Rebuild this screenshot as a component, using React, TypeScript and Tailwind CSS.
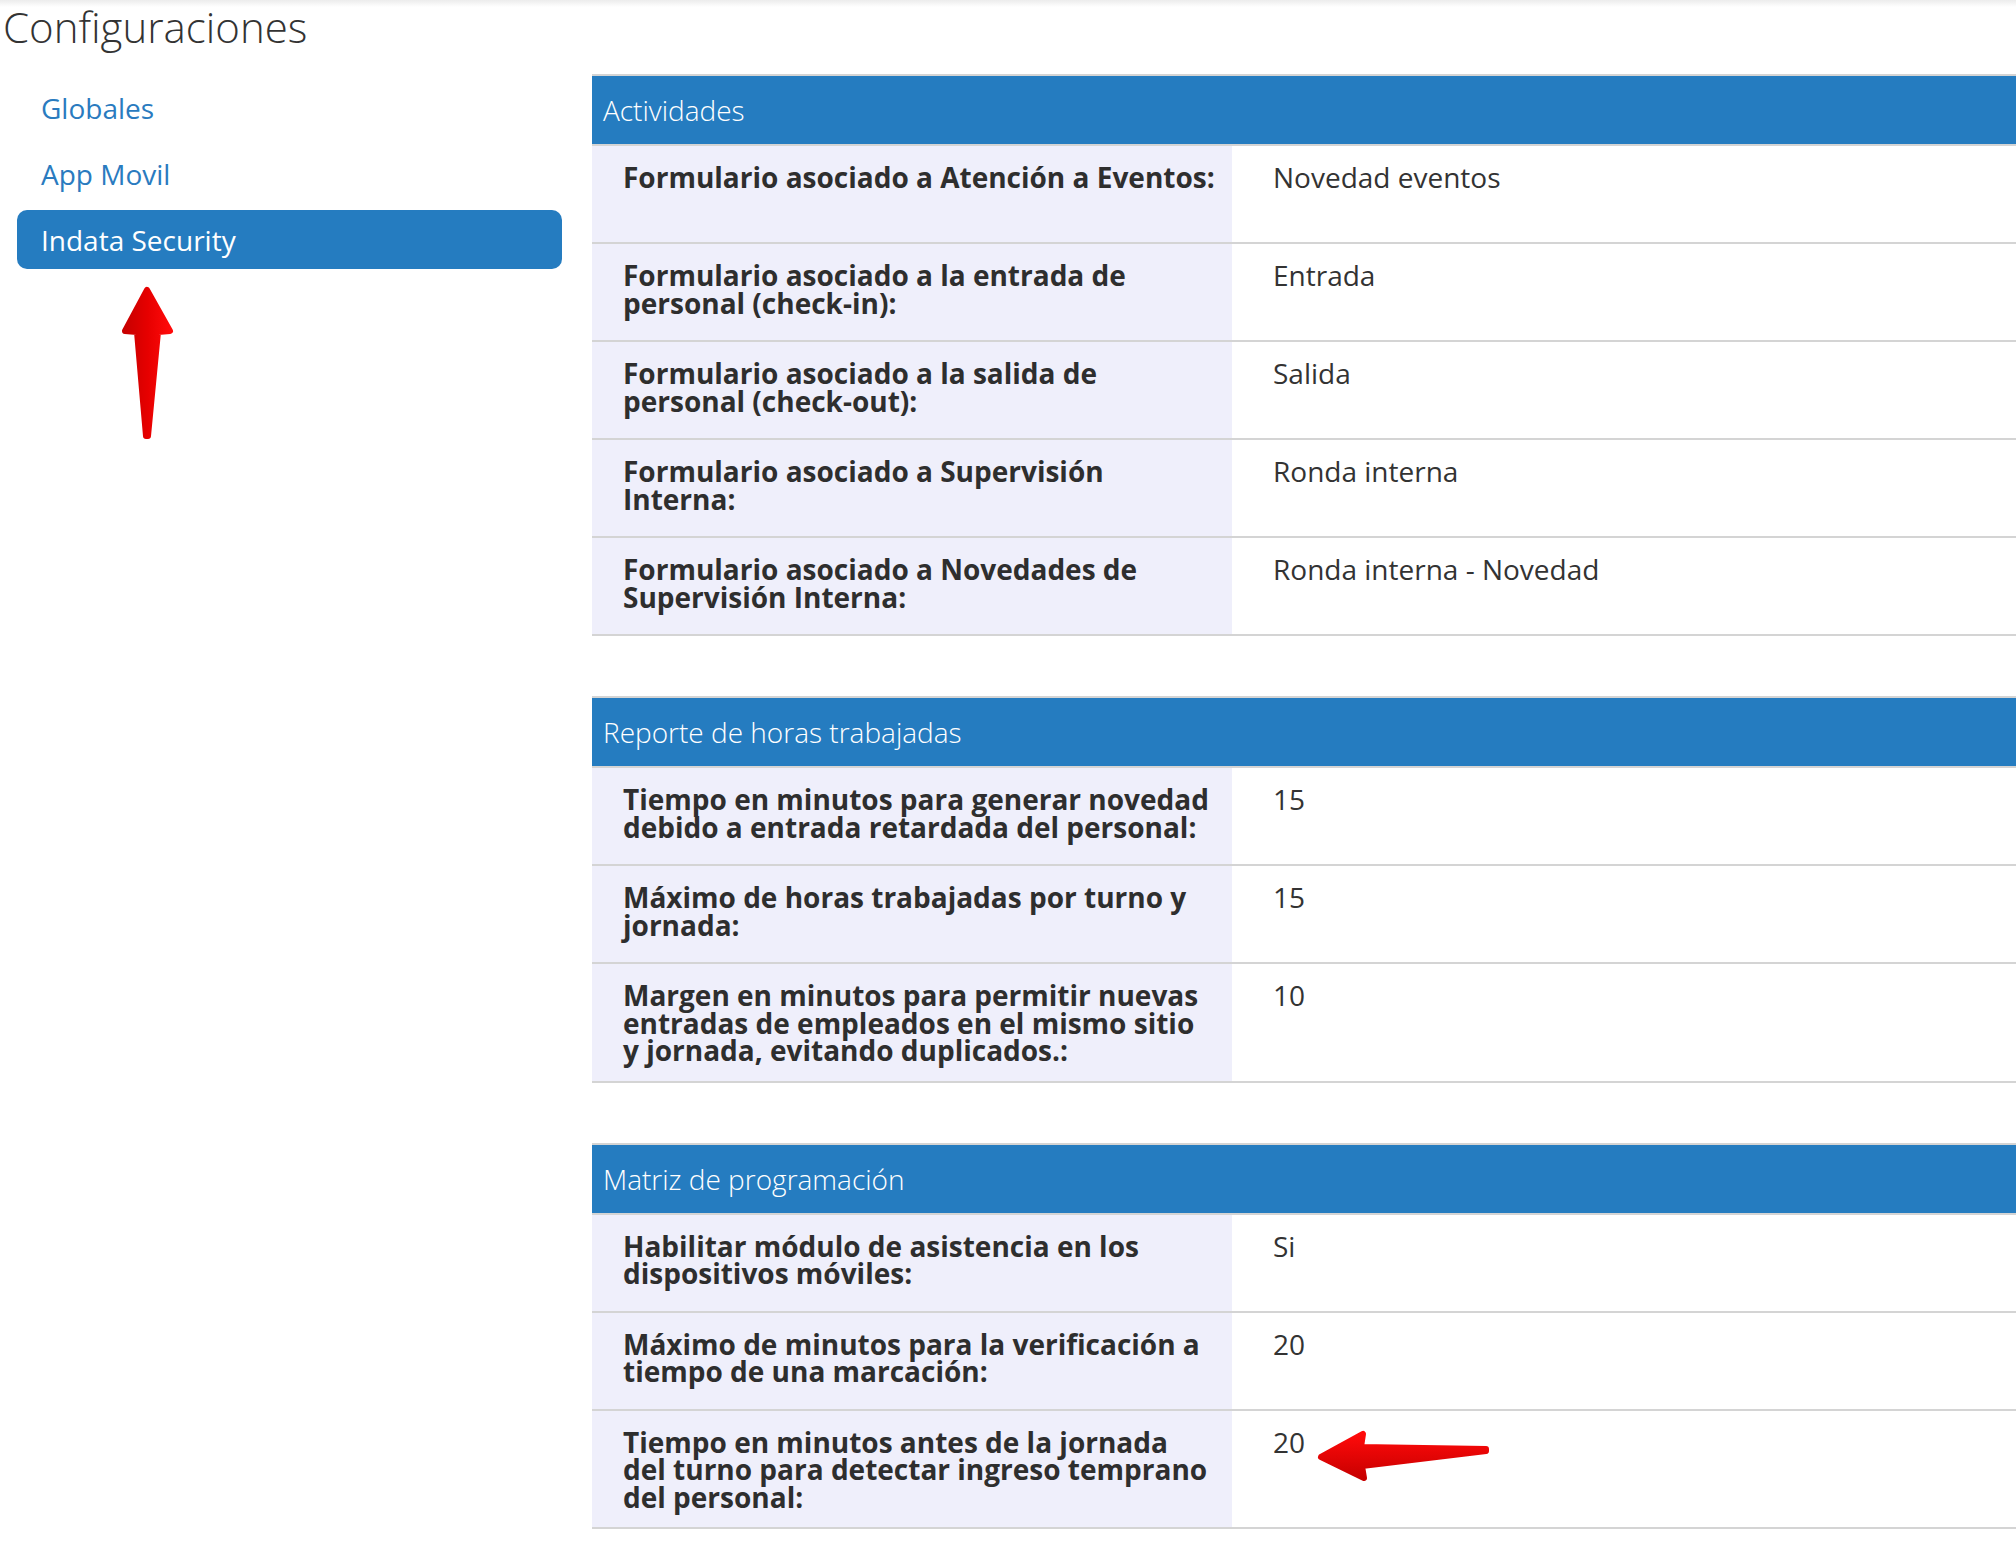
type Row = { label: string[]; value: string }
type Section = { title: string; rows: Row[] }

const sections: Section[] = [
  {
    title: 'Actividades',
    rows: [
      { label: ['Formulario asociado a Atención a Eventos:'], value: 'Novedad eventos' },
      { label: ['Formulario asociado a la entrada de', 'personal (check-in):'], value: 'Entrada' },
      { label: ['Formulario asociado a la salida de', 'personal (check-out):'], value: 'Salida' },
      { label: ['Formulario asociado a Supervisión', 'Interna:'], value: 'Ronda interna' },
      { label: ['Formulario asociado a Novedades de', 'Supervisión Interna:'], value: 'Ronda interna - Novedad' },
    ],
  },
  {
    title: 'Reporte de horas trabajadas',
    rows: [
      { label: ['Tiempo en minutos para generar novedad', 'debido a entrada retardada del personal:'], value: '15' },
      { label: ['Máximo de horas trabajadas por turno y', 'jornada:'], value: '15' },
      {
        label: ['Margen en minutos para permitir nuevas', 'entradas de empleados en el mismo sitio', 'y jornada, evitando duplicados.:'],
        value: '10',
      },
    ],
  },
  {
    title: 'Matriz de programación',
    rows: [
      { label: ['Habilitar módulo de asistencia en los', 'dispositivos móviles:'], value: 'Si' },
      { label: ['Máximo de minutos para la verificación a', 'tiempo de una marcación:'], value: '20' },
      {
        label: ['Tiempo en minutos antes de la jornada', 'del turno para detectar ingreso temprano', 'del personal:'],
        value: '20',
      },
    ],
  },
]

const nav = ['Globales', 'App Movil', 'Indata Security']

function SettingsTable({ section }: { section: Section }) {
  return (
    <div className="border-t-2 border-[#d4d4d4]">
      <div className="h-[70px] flex items-center px-[11px] bg-[#257cc0] text-white text-[28px] font-light border-b-2 border-[#d4d4d4]">
        {section.title}
      </div>
      {section.rows.map((r, i) => (
        <div key={i} className="flex min-h-[98px] border-b-2 border-[#d4d4d4]">
          <div className="w-[640px] shrink-0 bg-[#efeffb] pl-[31px] pr-[10px] pt-[18px] pb-[16px] text-[28px] leading-[27.5px] font-bold text-[#2e2e2e]">
            {r.label.map((l, j) => (
              <div key={j} className="whitespace-nowrap">{l}</div>
            ))}
          </div>
          <div className="flex-1 pl-[41px] pt-[18px] text-[28px] leading-[27.5px] text-[#333]">{r.value}</div>
        </div>
      ))}
    </div>
  )
}

export default function App() {
  return (
    <div className="relative min-h-screen w-[2016px] bg-[linear-gradient(#ececec,#fff_7px)] font-['Open_Sans',sans-serif] text-[#333]">
      <h1 className="pl-[3px] h-[74px] text-[42px] leading-[54px] font-light text-[#333]">Configuraciones</h1>
      <div className="flex">
        <nav className="w-[592px] shrink-0 pl-[17px] pr-[30px] pt-[4px] flex flex-col gap-[7px]">
          {nav.map((n) => {
            const active = n === 'Indata Security'
            return (
              <a
                key={n}
                href="#"
                className={
                  active
                    ? 'h-[59px] flex items-center px-[24px] rounded-[10px] bg-[#257cc0] text-white text-[28px]'
                    : 'h-[59px] flex items-center px-[24px] rounded-[10px] text-[#2a7bbf] text-[28px]'
                }
              >
                {n}
              </a>
            )
          })}
        </nav>
        <div className="flex-1 flex flex-col gap-[60px] pb-[38px]">
          {sections.map((s) => (
            <SettingsTable key={s.title} section={s} />
          ))}
        </div>
      </div>

      {/* red annotation arrows */}
      <svg className="absolute left-0 top-0 pointer-events-none" width="600" height="460" viewBox="0 0 600 460">
        <defs>
          <linearGradient id="upArrow" x1="0" y1="0" x2="1" y2="0">
            <stop offset="0" stopColor="#c80000" />
            <stop offset="0.5" stopColor="#e60000" />
            <stop offset="1" stopColor="#ff0a0a" />
          </linearGradient>
        </defs>
        <polygon
          points="147,290 170,331 158,332 148,436 146,436 137,332 125,331"
          fill="url(#upArrow)"
          stroke="url(#upArrow)"
          strokeWidth="6"
          strokeLinejoin="round"
        />
      </svg>
      <svg className="absolute left-[1290px] top-[1410px] pointer-events-none" width="220" height="90" viewBox="1290 1410 220 90">
        <defs>
          <linearGradient id="leftArrow" x1="0" y1="0" x2="0" y2="1">
            <stop offset="0" stopColor="#ff0a0a" />
            <stop offset="1" stopColor="#c80000" />
          </linearGradient>
        </defs>
        <polygon
          points="1321,1457 1363,1434 1361,1447 1486,1449 1486,1451 1362,1466 1364,1478"
          fill="url(#leftArrow)"
          stroke="url(#leftArrow)"
          strokeWidth="6"
          strokeLinejoin="round"
        />
      </svg>
    </div>
  )
}
